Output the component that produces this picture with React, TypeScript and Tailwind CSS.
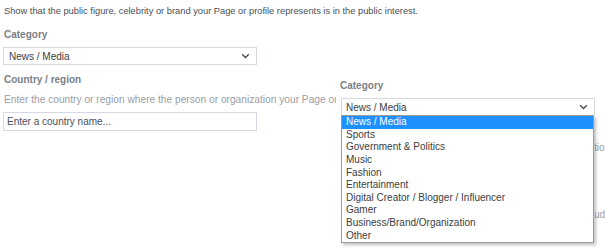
import React from "react";

const Chevron = () => (
  <svg width="9" height="6" viewBox="0 0 9 6" className="shrink-0">
    <path d="M1.2 1.3 L4.5 4.5 L7.8 1.3" fill="none" stroke="#4a4a4a" strokeWidth="1.3" />
  </svg>
);

const items = [
  "News / Media",
  "Sports",
  "Government & Politics",
  "Music",
  "Fashion",
  "Entertainment",
  "Digital Creator / Blogger / Influencer",
  "Gamer",
  "Business/Brand/Organization",
  "Other",
];

export default function App() {
  return (
    <div
      className="relative w-[605px] h-[249px] overflow-hidden bg-white"
      style={{ fontFamily: '"Liberation Sans", Arial, sans-serif' }}
    >
      <div className="flex">
        <div className="w-[336px] shrink-0 pl-[4px] pt-[5px]">
          <div className="text-[9.3px] leading-[12px] text-[#4b4f56] whitespace-nowrap">
            Show that the public figure, celebrity or brand your Page or profile represents is in the public interest.
          </div>
          <div className="mt-[12px] text-[10px] leading-[12px] font-bold text-[#7b7f86]">Category</div>
          <div className="mt-[6px] -ml-[1px] w-[254px] h-[18px] border border-[#d6d8dc] flex items-center justify-between pl-[5px] pr-[6px] text-[10px] text-[#3a3d42]">
            <span>News / Media</span>
            <Chevron />
          </div>
          <div className="mt-[9px] text-[10px] leading-[12px] font-bold text-[#7b7f86]">Country / region</div>
          <div className="mt-[8px] w-[332px] overflow-hidden text-[10.2px] leading-[12px] text-[#9a9ea4] whitespace-nowrap">
            Enter the country or region where the person or organization your Page or profile represents is located.
          </div>
          <div className="mt-[6px] -ml-[1px] w-[254px] h-[19px] border border-[#d3d9e4] flex items-center pl-[3px] text-[10px] text-[#4b4f56]">
            Enter a country name...
          </div>
        </div>
        <div className="flex-1 pl-[258px] text-[10px] leading-[12px] text-[#9a9ea4] whitespace-nowrap">
          <div className="mt-[142px]">tio</div>
          <div className="mt-[55px]">ud</div>
        </div>
      </div>

      <div className="absolute left-[336px] top-[78px] w-[259px] h-[171px] bg-white pl-[4px]">
        <div className="mt-[2px] text-[10px] leading-[12px] font-bold text-[#7b7f86]">Category</div>
        <div className="mt-[6px] ml-[1px] w-[254px] h-[17px] border border-[#d6d8dc] border-b-0 flex items-center justify-between pl-[4px] pr-[6px] text-[10px] text-[#3a3d42]">
          <span>News / Media</span>
          <Chevron />
        </div>
        <div className="ml-[1px] w-[253px] border border-[#9c9c9c] bg-white shadow-[2px_2px_3px_rgba(0,0,0,0.25)] text-[10px] text-[#3a3d42]">
          {items.map((it, i) => (
            <div
              key={it}
              className={
                i === 0
                  ? "h-[12.65px] leading-[12.65px] pl-[4px] bg-[#1e90ff] text-white"
                  : "h-[12.65px] leading-[12.65px] pl-[4px]"
              }
            >
              {it}
            </div>
          ))}
        </div>
      </div>
    </div>
  );
}
